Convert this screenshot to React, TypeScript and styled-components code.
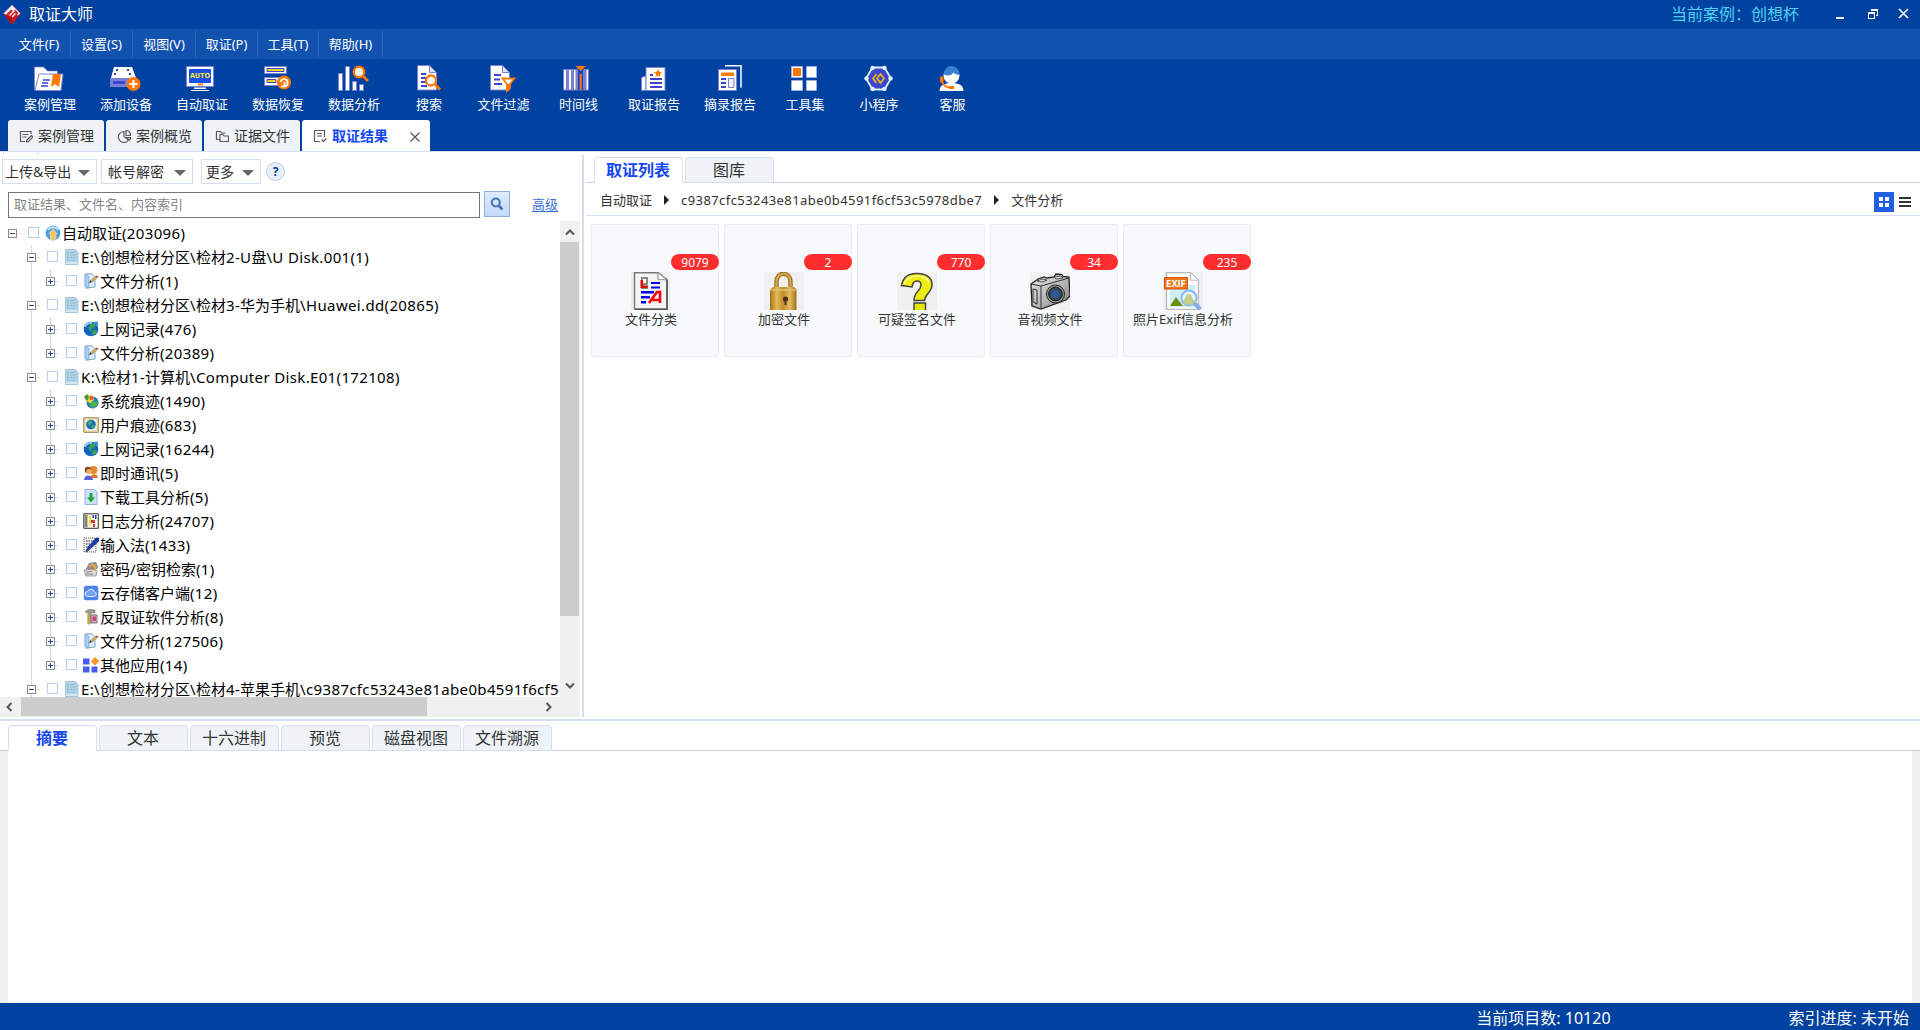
import React from 'react';
import styled, { createGlobalStyle, css } from 'styled-components';

const C = {
  brand: '#00429f',
  menu: '#1152ae',
  menuLine: '#2a68c0',
  line: '#d5dff0',
  rule: '#c9cbdd',
  tab: '#eff3f8',
  active: '#1548f0',
  text: '#333333',
};

const Global = createGlobalStyle`
  * { box-sizing: border-box; }
  html, body { margin: 0; padding: 0; }
  body {
    background: #fff;
    font-family: "Noto Sans", "Noto Sans CJK SC", sans-serif;
    font-weight: 400;
    overflow: hidden;
  }
  svg { display: block; flex: none; }
`;

const App_ = styled.div`
  width: 1920px;
  height: 1030px;
  display: flex;
  flex-direction: column;
  background: #fff;
  color: ${C.text};
  white-space: nowrap;
`;

/* ---------- title bar ---------- */
const TitleBar = styled.header`
  height: 29px;
  flex: none;
  display: flex;
  align-items: center;
  background: ${C.brand};
  color: #fff;
  padding: 0 9px 0 3px;
`;
const Title = styled.h1`
  margin: 0 auto 0 8px;
  font-size: 16px;
  font-weight: inherit;
  line-height: 26px;
  padding-bottom: 2px;
`;
const CaseName = styled.span`
  font-size: 16px;
  line-height: 26px;
  padding-bottom: 2px;
  color: #4fd0f4;
  margin-right: 36px;
`;
const WindowButtons = styled.div`
  display: flex;
  align-items: center;
  height: 26px;
  padding-bottom: 2px;
`;

/* ---------- menu bar ---------- */
const MenuBar = styled.nav`
  height: 30px;
  flex: none;
  display: flex;
  align-items: center;
  background: ${C.menu};
  padding-left: 8px;
`;
const MenuItem = styled.div<{ $w: number }>`
  width: ${p => p.$w}px;
  height: 26px;
  line-height: 26px;
  text-align: center;
  font-size: 13px;
  color: #fff;
  border-right: 1px solid ${C.menuLine};
`;

/* ---------- tool bar ---------- */
const ToolBar = styled.div`
  height: 61px;
  flex: none;
  display: flex;
  background: ${C.brand};
  padding: 6px 0 0 12px;
`;
const Tool = styled.div<{ $w: number }>`
  width: ${p => p.$w}px;
  display: flex;
  flex-direction: column;
  align-items: center;
  color: #fff;
  font-size: 13px;
  line-height: 20px;
  gap: 1px;
`;

/* ---------- page tabs ---------- */
const PageTabs = styled.div`
  height: 31px;
  flex: none;
  display: flex;
  gap: 2px;
  background: ${C.brand};
  padding-left: 8px;
`;
const PageTab = styled.div<{ $active?: boolean }>`
  width: ${p => (p.$active ? 128 : 96)}px;
  height: 31px;
  display: flex;
  align-items: center;
  gap: 5px;
  padding: ${p => (p.$active ? 0 : 1)}px 0 0 11px;
  border-radius: 3px 3px 0 0;
  background: ${p => (p.$active ? '#fff' : C.tab)};
  color: ${p => (p.$active ? C.active : C.text)};
  font-weight: ${p => (p.$active ? 700 : 'inherit')};
  font-size: 14px;
  line-height: 28px;
`;
const CloseTab = styled.span`
  margin: 2px 0 0 17px;
`;

const TopStrip = styled.div`
  height: 4px;
  flex: none;
  border-top: 1px solid ${C.line};
  padding-left: 3px;
`;
const StripTick = styled.div`
  width: 35px;
  height: 3px;
  border: solid ${C.line};
  border-width: 0 1px;
`;

/* ---------- work area ---------- */
const Work = styled.main`
  height: 562px;
  flex: none;
  display: flex;
`;
const LeftPanel = styled.section`
  width: 582px;
  flex: none;
  display: flex;
  flex-direction: column;
`;
const Splitter = styled.div`
  width: 2px;
  flex: none;
  background: ${C.line};
`;
const RightPanel = styled.section`
  flex: 1;
  display: flex;
  flex-direction: column;
  padding: 2px 0 0 2px;
`;

const FilterRow = styled.div`
  height: 36px;
  display: flex;
  align-items: center;
  padding: 0 0 3px 2px;
`;
const DropButton = styled.div<{ $w: number; $ml?: number; $pl: number }>`
  width: ${p => p.$w}px;
  height: 25px;
  margin-left: ${p => p.$ml ?? 0}px;
  padding: 0 6px 0 ${p => p.$pl}px;
  border: 1px solid ${C.line};
  display: flex;
  align-items: center;
  justify-content: space-between;
  font-size: 14px;
  line-height: 22px;
`;
const Caret = styled.i`
  margin-top: 2px;
  border: 6px solid transparent;
  border-top-color: #666;
  border-bottom: 0;
`;
const Help = styled.div`
  width: 19px;
  height: 19px;
  margin-left: 5px;
  border: 1px solid #bccde4;
  border-radius: 50%;
  background: #e9eff7;
  color: #00429f;
  font-size: 12px;
  font-weight: 700;
  line-height: 17px;
  text-align: center;
`;

const SearchRow = styled.div`
  height: 30px;
  display: flex;
  padding-left: 8px;
`;
const SearchBox = styled.div`
  width: 472px;
  height: 26px;
  margin-top: 1px;
  border: 1px solid #767676;
  padding-left: 5px;
  font-size: 13px;
  line-height: 23px;
  color: #858585;
`;
const SearchButton = styled.div`
  width: 26px;
  height: 26px;
  margin-left: 4px;
  border: 1px solid #91addd;
  background: linear-gradient(#dceafd, #c3dafd);
  display: flex;
  align-items: center;
  justify-content: center;
`;
const Advanced = styled.a`
  margin-left: 22px;
  font-size: 13px;
  line-height: 26px;
  color: #3a6fd8;
  text-decoration: underline;
  text-underline-offset: 2px;
`;

const TreeArea = styled.div`
  height: 476px;
  display: flex;
`;
const Tree = styled.div`
  width: 560px;
  height: 476px;
  overflow: hidden;
`;
const Row = styled.div`
  height: 24px;
  display: flex;
  align-items: center;
  padding-left: 8px;
`;
const Guide = styled.span<{ $line?: boolean }>`
  width: 19px;
  height: 24px;
  flex: none;
  background: ${p =>
    p.$line ? 'linear-gradient(#d9d9d9,#d9d9d9) 4px 0 / 1px 100% no-repeat' : 'none'};
`;
const Node = styled.span<{ $line: boolean; $last?: boolean }>`
  width: 20px;
  height: 24px;
  flex: none;
  display: flex;
  align-items: center;
  background:
    linear-gradient(#d9d9d9, #d9d9d9) 9px 12px / 4px 1px no-repeat
    ${p =>
      p.$line
        ? css`, linear-gradient(#d9d9d9, #d9d9d9) 4px 0 / 1px ${p.$last ? '12px' : '100%'} no-repeat`
        : ''};
`;
const Check = styled.span`
  width: 11px;
  height: 11px;
  flex: none;
  margin: 0 6px 2px 0;
  border: 1px solid #b4cdf8;
  background: #fff;
`;
const RowText = styled.span`
  margin-left: 1px;
  color: #000;
  font-size: 15px;
  line-height: 24px;
`;
const Latin = styled.span<{ $ls: number }>`
  letter-spacing: ${p => p.$ls}px;
`;

const VScroll = styled.div`
  width: 20px;
  height: 476px;
  background: #f0f0f0;
  display: flex;
  flex-direction: column;
  align-items: center;
  justify-content: space-between;
  padding: 0 1px 6px 0;
`;
const VTop = styled.div`
  display: flex;
  flex-direction: column;
  align-items: center;
  gap: 5px;
  padding-top: 6px;
`;
const VThumb = styled.div`
  width: 19px;
  height: 374px;
  background: #cdcdcd;
`;
const HScroll = styled.div`
  width: 580px;
  height: 20px;
  background: #f0f0f0;
  display: flex;
  align-items: center;
  padding: 0 27px 1px 5px;
`;
const HThumb = styled.div`
  width: 406px;
  height: 19px;
  margin: 0 auto 0 6px;
  background: #cdcdcd;
`;

/* ---------- sub tabs ---------- */
const SubTabs = styled.div<{ $pad: number }>`
  height: 26px;
  flex: none;
  display: flex;
  gap: 2px;
  padding-left: ${p => p.$pad}px;
  background: linear-gradient(${C.rule}, ${C.rule}) 0 25px / 100% 1px no-repeat;
`;
const SubTab = styled.div<{ $active?: boolean }>`
  width: 89px;
  height: 26px;
  border: 1px solid ${C.line};
  border-bottom-color: ${p => (p.$active ? '#fff' : C.line)};
  border-radius: 4px 4px 0 0;
  background: ${p => (p.$active ? '#fff' : C.tab)};
  color: ${p => (p.$active ? C.active : C.text)};
  font-weight: ${p => (p.$active ? 700 : 'inherit')};
  font-size: 16px;
  line-height: 24px;
  text-align: center;
  padding-right: 1px;
`;

const Crumbs = styled.div`
  height: 33px;
  flex: none;
  display: flex;
  align-items: center;
  border-bottom: 1px solid ${C.line};
  padding: 1px 7px 0 14px;
  font-size: 13px;
  line-height: 30px;
`;
const CrumbArrow = styled.i<{ $ml: number }>`
  margin: 0 12px 0 ${p => p.$ml}px;
  border: 5px solid transparent;
  border-left-color: #222;
  border-right: 0;
`;
const Views = styled.div`
  margin-left: auto;
  display: flex;
  align-items: center;
  gap: 4px;
  padding-top: 4px;
`;

const Cards = styled.div`
  display: flex;
  gap: 5px;
  padding: 8px 0 0 5px;
`;
const Card = styled.div`
  position: relative;
  width: 128px;
  height: 133px;
  border: 1px solid #e9ecf0;
  border-radius: 2px;
  background: #f7f9fc;
  display: flex;
  flex-direction: column;
  align-items: center;
  padding: 47px 8px 0 0;
  font-size: 13px;
  line-height: 19px;
`;
const Badge = styled.span`
  position: absolute;
  right: -1px;
  top: 29px;
  width: 48px;
  height: 16px;
  border-radius: 8px;
  background: #ff2d2d;
  color: #fff;
  font-size: 12px;
  line-height: 17px;
  text-align: center;
`;

/* ---------- detail pane ---------- */
const Detail = styled.section`
  flex: 1;
  display: flex;
  flex-direction: column;
  border-top: 2px solid ${C.line};
  margin-top: 2px;
  padding-top: 4px;
`;
const DetailBody = styled.div`
  flex: 1;
  border: solid #f0f0f0;
  border-width: 0 8px;
  background: #fff;
`;
const StatusBar = styled.footer`
  height: 27px;
  flex: none;
  background: ${C.brand};
  color: #fff;
  display: flex;
  justify-content: flex-end;
  padding: 1px 11px 0 0;
  gap: 178px;
  font-size: 16px;
  line-height: 29px;
`;

/* ---------- drawings ---------- */
const P = '#7a80d4';
const B = '#3a46cf';
const O = '#ff7800';

const Logo = () => (
  <svg width="18" height="20" viewBox="0 0 18 20">
    <path d="M9 0 17.500 8.500 9 19.500 .5 8.500z" fill="#d9161c" />
    <path d="M9 0 17.500 8.500 14.500 10.500 9 6 3.500 10.500 .5 8.500z" fill="#f3f3f5" />
    <path d="M3 9.500 8 4.500l2 1.500L5.500 11zM9.500 6.500l2.500-2L15.500 8l-2 2.500z" fill="#d2262a" />
    <path d="m6.500 10.500 5-5M9 12l3.500-3.500" stroke="#fff" strokeWidth="1.300" />
    <path d="M9 13v6.500L.5 8.500z" fill="#b40d12" />
  </svg>
);

const toolIcons: Record<string, React.ReactNode> = {
  case: (
    <>
      <path d="M.5 25V2h9l4 4h10v5H7L4 25z" fill="#fff" stroke={P} strokeWidth=".6" />
      <path d="M5 9h24l-2 16.500H1z" fill="#fff" stroke={P} />
      <path d="M9 15h7M8 18h6M7 21h7" stroke={B} strokeWidth="1.600" />
      <path d="M19 9h8l-2 13-4-3-4 3z" fill={O} />
    </>
  ),
  device: (
    <>
      <path d="M4 2h18l4 11H1z" fill="#fff" />
      <path d="M0 13h25v9H0z" fill={P} />
      <path d="M3 16h12v3H3z" fill={B} />
      <path d="M6 4h2v2H6zM17 4h2v2h-2zM4 8h2v2H4zM19 8h2v2h-2z" fill={B} />
      <circle cx="23.500" cy="19" r="7" fill={O} />
      <path d="M23.500 15v8M19.500 19h8" stroke="#fff" strokeWidth="2" />
    </>
  ),
  auto: (
    <>
      <path d="M.5 1.500h27v20H.5z" fill="#fff" stroke={P} />
      <path d="M3 4h22v14H3z" fill="#1a50e8" />
      <path d="M12 18.500h5v2h-5z" fill={O} />
      <path d="M8 22.500h12v1.500H8zM5 25h18v1H5z" fill="#fff" />
      <text x="14" y="12.500" fontSize="7" fontWeight="700" fontFamily="DejaVu Sans" textLength="20" lengthAdjust="spacingAndGlyphs" textAnchor="middle" fill="#f3e824">AUTO</text>
    </>
  ),
  restore: (
    <>
      <path d="M2.500 1.500h22v7h-22zM2.500 12.500h22v8h-22z" fill="#fff" stroke={P} />
      <path d="M5 3.500h17v3H5zM5 14.500h9v3H5z" fill="#f0d820" stroke={B} />
      <circle cx="22" cy="17.500" r="7" fill={O} />
      <path d="M18.500 17a3.600 3.600 0 1 1 4 4.300M22.500 17v4.500H19" stroke="#fff" strokeWidth="1.800" fill="none" />
    </>
  ),
  analyse: (
    <>
      <path d="M.5 8.500h4v17h-4zM7.500 1.500h4v24h-4zM14.500 16.500h4v9h-4zM21.500 19.500h4v6h-4z" fill="#fff" stroke={P} />
      <circle cx="21" cy="7" r="5.200" fill="#fff" stroke={O} strokeWidth="2.400" />
      <path d="m25 11 5 5" stroke={O} strokeWidth="2.600" />
    </>
  ),
  search: (
    <>
      <path d="M4.500.5h12l7 7V25h-19z" fill="#fff" stroke={P} />
      <path d="M16.500.5v7h7z" fill="#dfe2fa" stroke={P} />
      <path d="M8 9h5M8 13h5M8 17h5M8 21h6" stroke={B} strokeWidth="1.800" />
      <circle cx="18" cy="15.500" r="5" fill="#fff" stroke={O} strokeWidth="2.300" />
      <path d="m22 19.500 5 5" stroke={O} strokeWidth="2.800" />
    </>
  ),
  filter: (
    <>
      <path d="M2.500.5h12l7 7V25h-19z" fill="#fff" stroke={P} />
      <path d="M14.500.5v7h7z" fill="#dfe2fa" stroke={P} />
      <path d="M6 10h7M6 14.500h6M6 19h8" stroke={B} strokeWidth="1.800" />
      <path d="M14.500 13.500h12l-4.500 5.500v4l-3 3v-7z" fill="#fff" stroke={O} strokeWidth="1.800" />
      <path d="M19 19h3v4l-3 3z" fill={O} />
    </>
  ),
  time: (
    <>
      <path d="M.5 4.500h25V25H.5z" fill="#fff" stroke={P} />
      <path d="M3 4.500h3V25H3zM8 4.500h3V25H8zM12.500 4.500H15V25h-2.500zM20.500 4.500h3V25h-3z" fill={P} />
      <path d="M15 4h5.500v21H15z" fill="#1d43b5" />
      <path d="M16.700 9h2v16h-2z" fill={O} />
      <path d="M12.500 1h10.500l-5.300 5z" fill={O} />
    </>
  ),
  report: (
    <>
      <path d="M3.500 12.500 8 11v14.500H3.500z" fill="#fff" stroke={P} />
      <path d="M8 2.500h19v23H8z" fill="#fff" stroke={P} />
      <path d="m20 4 1.200 2.800 3 .2-2.300 2 .7 3-2.600-1.600L17.400 12l.7-3-2.300-2 3-.2z" fill={O} />
      <path d="M12 10h3M12 14h12M12 18h12M12 22h12" stroke={B} strokeWidth="1.800" />
    </>
  ),
  excerpt: (
    <>
      <path d="M11 .8h16v22" fill="none" stroke="#fff" strokeWidth="1.500" />
      <path d="M4.500 4.500h18v21h-18z" fill="#fff" stroke={P} />
      <path d="M7 7.500h13v3.500H7z" fill={O} />
      <path d="M7 14h5M7 18h5M7 22h5" stroke={B} strokeWidth="1.800" />
      <path d="M14.500 13.500h5.500v9h-5.500z" fill="#eef" stroke={P} />
    </>
  ),
  tools: (
    <>
      <path d="M2.500 1.500h11v11h-11zM17.500 1.500h10v11h-10zM2.500 15.500h11v10h-11zM17.500 15.500h10v10h-10z" fill="#fff" stroke="#aab0e8" strokeWidth=".8" />
      <path d="M4 3h8v8H4z" fill={O} />
    </>
  ),
  mini: (
    <>
      <path d="M9.500 2.500h12L28 13.500l-6.500 11h-12L3 13.500z" fill={B} stroke="#dff0ff" strokeWidth="1.800" />
      <g fill="#dff0ff">
        <circle cx="9.500" cy="3" r="2.200" /><circle cx="21.500" cy="3" r="2.200" /><circle cx="27.500" cy="13.500" r="2.200" />
        <circle cx="3.500" cy="13.500" r="2.200" /><circle cx="9.500" cy="24" r="2.200" /><circle cx="21.500" cy="24" r="2.200" />
      </g>
      <path d="m13.500 9-3.500 4.500 3.500 4.500M17.500 9 14 13.500l3.500 4.500 3.500-4.500z" fill="none" stroke="#f2b01c" strokeWidth="1.800" />
    </>
  ),
  service: (
    <>
      <path d="M2.500 26c0-6 5-8 12-8s12 2 12 8z" fill="#fff" />
      <circle cx="14.500" cy="10.500" r="8" fill="#fff" />
      <path d="M6.500 9.500a8 8.500 0 0 1 16 0c-3 1-5-1-6-2-2 3-5 4-10 2z" fill="#3c82d2" />
      <path d="M3 11.500h3.500v6H3z" fill={O} />
      <path d="M5 16c1 5 4 6.500 9 6.500" stroke={O} strokeWidth="1.500" fill="none" />
      <path d="M12 21h5v3h-5z" fill={O} />
    </>
  ),
};
const ToolIcon = ({ k }: { k: string }) => (
  <svg width="32" height="28" viewBox="0 0 32 28">{toolIcons[k]}</svg>
);

const tabIcons: Record<string, React.ReactNode> = {
  edit: <path d="M6 12.500H1.500v-10H12V5M3.500 5.500h6M3.500 8h4M12.500 6.500l-5 5v1.500H9l5-5z" />,
  pie: <path d="M7 2.500A5.500 5.500 0 1 0 11.500 11L7 7.500zM9 1.500v5h4.500c0-3-1.500-5-4.500-5zM9 8.500l3.500 2.500c.7-.8 1-1.500 1-2.500z" />,
  files: <path d="M4.500 10.500h-3v-8h4l1 1.500h4M5 12.500v-7h3l1 1.500h4.500v5.500z" />,
  result: <path d="M7 12.500H1.500v-11h10V8M4 4.500h5M4 7h5M8.500 10.500l2 2 3-3" />,
};
const TabIcon = ({ k }: { k: string }) => (
  <svg width="14" height="14" viewBox="0 0 14 14" fill="none" stroke="#5a5a5a" strokeWidth="1.200">{tabIcons[k]}</svg>
);

const globe = (
  <>
    <circle cx="8" cy="8" r="7.300" fill="#1763c6" />
    <path d="M7.500 3c2-1.500 4-1 5.500 0l-1.500 3-2 1-2 3-2-2.500zM9 10l3-1 2 1-2 3.500-2.500 1z" fill="#35a845" />
    <path d="M2 6c1.500-3 4-4.500 7-4" stroke="#8fd0ff" strokeWidth="1.600" fill="none" />
  </>
);
const treeIcons: Record<string, React.ReactNode> = {
  root: (
    <>
      <circle cx="8" cy="8" r="7" fill="#4d9fe0" stroke="#2a78c8" strokeWidth=".6" />
      <path d="M3 5a6 6 0 0 1 10 0" stroke="#bfe3ff" strokeWidth="2" fill="none" />
      <path d="M5.500 15V9L4 8.500 8 4l4 4.500-1 .5v5z" fill="#f6c35a" stroke="#fff0cf" strokeWidth=".5" />
    </>
  ),
  disk: (
    <>
      <path d="M1.500.5H11L14 3v12.500H1.500z" fill="#b7d5e8" stroke="#8fb2ca" strokeWidth=".7" />
      <path d="M3.500 3.500h1M3.500 6h1M3.500 8.500h1M3.500 11h1" stroke="#3d7d9c" />
      <path d="M6 3.500h5M6 6h5.500M6 8.500h5.500M6 11h5.500" stroke="#8fb6cf" />
      <path d="M2 13h11.500v2H2z" fill="#d3e6f2" />
    </>
  ),
  file: (
    <>
      <path d="M3 .8h6l3 3v10l-9 1.500z" fill="#e4f0fc" stroke="#6e93bd" strokeWidth=".9" />
      <path d="M1.800 1 6 3.500V15l-4.200-1.500z" fill="#a9cdf0" stroke="#6e93bd" strokeWidth=".6" />
      <path d="m6.500 9.500 1-2L12.500 3.500l1.500 1.500L9 9z" fill="#d9b24e" stroke="#555" strokeWidth=".4" />
      <path d="m12.500 3.500 1-1 1.800 1-1.300 1.500z" fill="#c4392f" />
      <path d="m6.200 9.800 1-2.300L9 9z" fill="#333" />
    </>
  ),
  globe: <>{globe}<path d="m10 1 5-.5L14.500 6z" fill="#2d8ee0" /></>,
  system: (
    <>
      <circle cx="9.500" cy="9.500" r="6" fill="#2a72c8" />
      <path d="M6 9c3-2 5 1 8-1l1 3-4 4-4-2z" fill="#43b84a" />
      <path d="M1 4 4 1l6 2 1 4-4 3-4-2z" fill="#f3d53c" />
      <path d="m1 4 3-3 2 4-2 3z" fill="#3a9a43" /><path d="M6 3h4v4H7z" fill="#e8632c" />
    </>
  ),
  user: (
    <>
      <path d="M.8.8h14.500v14.500H.8z" fill="#f0dfa0" stroke="#9a854a" />
      <path d="M2.500 2.500h11v11h-11z" fill="#e4eff8" />
      <circle cx="8" cy="7.500" r="4.800" fill="#1d6cb8" />
      <path d="M5 5l3-1.500L9 6 6 9zM8 9l3-1 1 1-2 3z" fill="#49b553" />
    </>
  ),
  chat: (
    <>
      <circle cx="10.500" cy="5" r="4" fill="#e8882f" />
      <path d="M7 13c1-5 7-5 8 0z" fill="#e6742a" />
      <circle cx="5" cy="5" r="3.300" fill="#8a4b27" /><circle cx="6" cy="6.500" r="2.600" fill="#f0b070" />
      <path d="M1 15c0-6 8.500-6 9 0z" fill="#5a62dd" />
    </>
  ),
  download: (
    <>
      <path d="M2 .5h9.500L14 3v12.500H2z" fill="#cfe1fd" stroke="#7e9fd8" strokeWidth=".8" />
      <path d="M6.500 4h3v4.500H12l-4 5-4-5h2.500z" fill="#19a83a" />
    </>
  ),
  log: (
    <>
      <path d="M.8.8h14.500v14.500H.8z" fill="#fdfbe8" stroke="#333" />
      <path d="M1.500 1.500h3v13h-3z" fill="#8a8378" />
      <path d="M6 3h2v9H6z" fill="#f0dc4a" /><path d="M9.500 2h1.500v3H9.500zM12 2h1.500v4H12z" fill="#3140d0" />
      <path d="M8 7h4v3H8zM10 11h2v3h-2z" fill="#d43a46" />
    </>
  ),
  input: (
    <>
      <path d="M1 1h12v14H1z" fill="#eee" stroke="#555" strokeDasharray="1 1" />
      <path d="M3 4h8M3 7h6M3 10h5M3 13h3" stroke="#222" strokeDasharray="1.500 1" />
      <path d="M13 1h3v3L7 12l-4 3 2-5z" fill="#1b3fae" stroke="#0a1a55" strokeWidth=".6" />
    </>
  ),
  password: (
    <>
      <path d="M3 8 6 2l7-1 2 5-2 3z" fill="#8c8f94" />
      <path d="M6 6c0-4 7-4 7 0v3h-2V6.500c0-2-3-2-3 0" fill="#f2a73c" />
      <path d="m1 9 8-1 5 2-1 5H3z" fill="#dcdcd8" stroke="#777" strokeWidth=".7" />
      <path d="m3 11 6-.5M3 13h7" stroke="#888" />
    </>
  ),
  cloud: (
    <>
      <rect x=".8" y=".8" width="14.500" height="14.500" rx="2.500" fill="#4d82ee" />
      <path d="M4.500 11.500a2.500 2.500 0 0 1 0-5 3.700 3.700 0 0 1 7 .5 2.300 2.300 0 0 1 0 4.500z" fill="#6fa4f6" stroke="#e3eeff" strokeWidth="1" />
    </>
  ),
  anti: (
    <>
      <path d="M2 3c2-3 6-2.500 10-2v3H8L7 15H5V4z" fill="#9a9c90" stroke="#6b6b62" strokeWidth=".5" />
      <path d="M4.500 5h3v10h-3z" fill="#c9a64a" />
      <path d="M8 6h6v8H8z" fill="#b9bde0" stroke="#7a5068" strokeWidth=".8" /><path d="M9.500 7.500H13V12H9.500z" fill="#d0407c" />
    </>
  ),
  other: (
    <>
      <path d="M0 1.500h6.500v6H0zM0 9.500h6.500v6H0zM8.500 9.500h6v6h-6z" fill="#4a5cf0" />
      <path d="m12 0 4.200 4.200L12 8.400 7.800 4.200z" fill="#f7952a" />
    </>
  ),
};
const TreeIcon = ({ k }: { k: string }) => (
  <svg width="16" height="16" viewBox="0 0 16 16">{treeIcons[k]}</svg>
);
const Expander = ({ open }: { open: boolean }) => (
  <svg width="9" height="9" viewBox="0 0 9 9" shapeRendering="crispEdges">
    <path d="M.5.5h8v8h-8z" fill="#fff" stroke="#8a8a8a" />
    <path d={open ? 'M2 4.500h5' : 'M2 4.500h5M4.500 2v5'} stroke="#2a4384" />
  </svg>
);
const Chevron = ({ d }: { d: string }) => (
  <svg width="10" height="10" viewBox="0 0 10 10" fill="none" stroke="#555" strokeWidth="2"><path d={d} /></svg>
);

const cardIcons: Record<string, React.ReactNode> = {
  classify: (
    <>
      <path d="M3.500.7h23.500l9 7V37h-32.500z" fill="#f4f4f4" stroke="#777" strokeWidth="1.500" />
      <path d="M36 8v29.500H4" fill="none" stroke="#555" strokeWidth="1.500" />
      <path d="M27 .7v7h9z" fill="#fff" stroke="#888" />
      <path d="M10 5h7v12h-7z" fill="#888" /><path d="M12 7h3v4h-3z" fill="#fff" />
      <path d="M9.500 8h2.500v6h4.500v2h-7z" fill="#e00" />
      <path d="M20 10h9v2h-9zM20 14.500h9v2h-9zM10 19h13v2.500H10zM10 24h9v2.500h-9zM10 29h5v2.500h-5z" fill="#0000f0" />
      <path d="m18 31 8-11h3v11M21.500 28h7" fill="none" stroke="#f00" strokeWidth="2.600" />
    </>
  ),
  lock: (
    <>
      <defs>
        <linearGradient id="gold" x1="0" x2="1"><stop offset="0" stopColor="#a57317" /><stop offset=".25" stopColor="#e3b95b" /><stop offset=".5" stopColor="#c18d2a" /><stop offset=".75" stopColor="#e5bb60" /><stop offset="1" stopColor="#a06f18" /></linearGradient>
      </defs>
      <path d="M12.500 19V10c0-11 14-11 14 0v9" fill="none" stroke="#9a6f22" strokeWidth="4.400" />
      <path d="M12.500 19V10c0-11 14-11 14 0v9" fill="none" stroke="#d6ab50" strokeWidth="2" />
      <path d="m6 18 3-3h21l2.500 2.500V38H6z" fill="url(#gold)" />
      <path d="M6 18h26.500" stroke="#f0cf80" />
      <circle cx="21.500" cy="27" r="2.600" fill="#4a3210" /><path d="M20.500 27h2v6h-2z" fill="#4a3210" />
    </>
  ),
  question: (
    <>
      <path d="M4.500 13.500C6 5 12 1.500 20 1.500c9 0 15 4 15 11 0 8-7 9-7.500 16H17c0-9 7-9.500 7-15.500 0-2.500-1.500-4-4-4-3 0-4.500 2.500-5 6z" fill="#eded12" stroke="#444" strokeWidth="1.500" />
      <path d="M7.500 11.500C10 6 14 4 20 4c6 0 10 2 12 6" fill="none" stroke="#fbfb9a" strokeWidth="1.600" />
      <path d="M17 31h11.500v8H17z" fill="#e6e60a" stroke="#444" strokeWidth="1.500" />
    </>
  ),
  camera: (
    <>
      <defs>
        <linearGradient id="steel" y2="1"><stop offset="0" stopColor="#e6e6e6" /><stop offset=".6" stopColor="#b0b0b0" /><stop offset="1" stopColor="#757575" /></linearGradient>
      </defs>
      <path d="M1 12 8 7l6-2 3 1 7-1 2-3 6 .5 1 2L39 5l1 19-4 4-25 9-9-3z" fill="url(#steel)" stroke="#222" strokeWidth="1.300" />
      <path d="m1 12 10 2 28-8M11 14v22M3 17l4 1v14l-4-2z" fill="none" stroke="#333" />
      <path d="m7 9 5-2 5 1-5 2zM24 5l7-1 2 2-7 1z" fill="#ddd" stroke="#333" strokeWidth=".8" />
      <circle cx="25.500" cy="22" r="9" fill="#999" stroke="#222" />
      <circle cx="25.500" cy="22" r="6.800" fill="#3c4650" stroke="#111" />
      <circle cx="25.500" cy="22" r="4.300" fill="#2c5a98" />
    </>
  ),
  exif: (
    <>
      <path d="M3.500.7h24l8 7.500V37.500h-32z" fill="#fafafa" stroke="#bbb" strokeWidth="1.300" />
      <path d="M27.500.7v7.500h8z" fill="#fff" stroke="#bbb" />
      <path d="M7 13h25v22H7z" fill="#cdeffc" />
      <path d="m7 34 6-9 7 9z" fill="#6e8c10" />
      <circle cx="26" cy="26" r="7.500" fill="#e8f4fd" stroke="#8ab6f0" strokeWidth="2" />
      <path d="M20 30c2-3 3-8 6-8s3 5 6 8c-3 4-9 4-12 0z" fill="#c3cf88" />
      <path d="m31.500 31.500 6 6" stroke="#82b0ee" strokeWidth="4" />
      <path d="M1.500 5.500h23v11.500h-23z" fill="#f0741c" stroke="#d0560c" />
      <text x="13" y="14.500" fontSize="9" fontWeight="700" fontFamily="DejaVu Sans" textAnchor="middle" textLength="20" lengthAdjust="spacingAndGlyphs" fill="#fff">EXIF</text>
    </>
  ),
};
const CardIcon = ({ k }: { k: string }) => (
  <svg width="40" height="38" viewBox="0 0 40 38"><path d="M0 0h40v38H0z" fill="#f0f0f0" />{cardIcons[k]}</svg>
);

/* ---------- data ---------- */
const menus: [string, number][] = [['文件(F)', 63], ['设置(S)', 62], ['视图(V)', 63], ['取证(P)', 62], ['工具(T)', 61], ['帮助(H)', 64]];
const tools: [string, string, number][] = [
  ['case', '案例管理', 76], ['device', '添加设备', 76], ['auto', '自动取证', 76], ['restore', '数据恢复', 76],
  ['analyse', '数据分析', 76], ['search', '搜索', 74], ['filter', '文件过滤', 75], ['time', '时间线', 75],
  ['report', '取证报告', 76], ['excerpt', '摘录报告', 76], ['tools', '工具集', 74], ['mini', '小程序', 74], ['service', '客服', 73],
];
type TreeRow = { l: number; i: string; t: string; open?: boolean; last?: boolean };
const rows: TreeRow[] = [
  { l: 0, i: 'root', t: '自动取证(203096)', open: true },
  { l: 1, i: 'disk', t: 'E:\\创想检材分区\\检材2-U盘\\U Disk.001(1)', open: true },
  { l: 2, i: 'file', t: '文件分析(1)', last: true },
  { l: 1, i: 'disk', t: 'E:\\创想检材分区\\检材3-华为手机\\Huawei.dd(20865)', open: true },
  { l: 2, i: 'globe', t: '上网记录(476)' },
  { l: 2, i: 'file', t: '文件分析(20389)', last: true },
  { l: 1, i: 'disk', t: 'K:\\检材1-计算机\\Computer Disk.E01(172108)', open: true },
  { l: 2, i: 'system', t: '系统痕迹(1490)' },
  { l: 2, i: 'user', t: '用户痕迹(683)' },
  { l: 2, i: 'globe', t: '上网记录(16244)' },
  { l: 2, i: 'chat', t: '即时通讯(5)' },
  { l: 2, i: 'download', t: '下载工具分析(5)' },
  { l: 2, i: 'log', t: '日志分析(24707)' },
  { l: 2, i: 'input', t: '输入法(1433)' },
  { l: 2, i: 'password', t: '密码/密钥检索(1)' },
  { l: 2, i: 'cloud', t: '云存储客户端(12)' },
  { l: 2, i: 'anti', t: '反取证软件分析(8)' },
  { l: 2, i: 'file', t: '文件分析(127506)' },
  { l: 2, i: 'other', t: '其他应用(14)', last: true },
  { l: 1, i: 'disk', t: 'E:\\创想检材分区\\检材4-苹果手机\\c9387cfc53243e81abe0b4591f6cf5', open: true },
];
const cards = [
  ['classify', '文件分类', '9079'], ['lock', '加密文件', '2'], ['question', '可疑签名文件', '770'],
  ['camera', '音视频文件', '34'], ['exif', '照片Exif信息分析', '235'],
];

/* Widens only the Latin runs of a mixed string. */
const Mixed = ({ t, ls }: { t: string; ls: number }) => (
  <>
    {t.split(/([\x20-\x7e]+)/).map((s, i) => (i % 2 ? <Latin key={i} $ls={ls}>{s}</Latin> : s))}
  </>
);

export default function App() {
  return (
    <App_>
      <Global />
      <TitleBar>
        <Logo />
        <Title>取证大师</Title>
        <CaseName>当前案例：创想杯</CaseName>
        <WindowButtons>
          <svg width="76" height="14" viewBox="0 0 76 14" fill="none" stroke="#fff" shapeRendering="crispEdges">
            <path d="M1 11h8" strokeWidth="2" />
            <path d="M36.500 4V2.500h6v6H41M33.500 5.500h6v6h-6zM36 3h7M33 6h7" />
            <path d="m64 2 9 9M73 2l-9 9" strokeWidth="1.600" shapeRendering="auto" />
          </svg>
        </WindowButtons>
      </TitleBar>
      <MenuBar>{menus.map(([t, w]) => <MenuItem key={t} $w={w}>{t}</MenuItem>)}</MenuBar>
      <ToolBar>
        {tools.map(([k, t, w]) => <Tool key={k} $w={w}><ToolIcon k={k} />{t}</Tool>)}
      </ToolBar>
      <PageTabs>
        <PageTab><TabIcon k="edit" />案例管理</PageTab>
        <PageTab><TabIcon k="pie" />案例概览</PageTab>
        <PageTab><TabIcon k="files" />证据文件</PageTab>
        <PageTab $active>
          <TabIcon k="result" />取证结果
          <CloseTab>
            <svg width="10" height="10" viewBox="0 0 10 10" stroke="#555" strokeWidth="1.200"><path d="m.5.5 9 9M9.500.5l-9 9" /></svg>
          </CloseTab>
        </PageTab>
      </PageTabs>
      <TopStrip><StripTick /></TopStrip>

      <Work>
        <LeftPanel>
          <FilterRow>
            <DropButton $w={95} $pl={2}>上传&amp;导出<Caret /></DropButton>
            <DropButton $w={92} $ml={4} $pl={6}>帐号解密<Caret /></DropButton>
            <DropButton $w={60} $ml={8} $pl={4}>更多<Caret /></DropButton>
            <Help>?</Help>
          </FilterRow>
          <SearchRow>
            <SearchBox>取证结果、文件名、内容索引</SearchBox>
            <SearchButton>
              <svg width="14" height="14" viewBox="0 0 14 14" fill="none" stroke="#4a74b4" strokeWidth="2"><circle cx="5.800" cy="5.500" r="4" /><path d="m8.500 8.500 4 4" strokeWidth="2.600" /></svg>
            </SearchButton>
            <Advanced>高级</Advanced>
          </SearchRow>
          <TreeArea>
            <Tree>
              {rows.map((r, i) => (
                <Row key={i}>
                  {r.l > 0 && <Guide />}
                  {r.l > 1 && <Guide $line />}
                  <Node $line={r.l > 0} $last={r.last}><Expander open={!!r.open} /></Node>
                  <Check />
                  <TreeIcon k={r.i} />
                  <RowText><Mixed t={r.t} ls={0.35} /></RowText>
                </Row>
              ))}
            </Tree>
            <VScroll>
              <VTop><Chevron d="M1 7.500 5 3.500l4 4" /><VThumb /></VTop>
              <Chevron d="m1 2.500 4 4 4-4" />
            </VScroll>
          </TreeArea>
          <HScroll>
            <Chevron d="M6.500 1l-4 4 4 4" />
            <HThumb />
            <Chevron d="m3.500 1 4 4-4 4" />
          </HScroll>
        </LeftPanel>
        <Splitter />
        <RightPanel>
          <SubTabs $pad={8}>
            <SubTab $active>取证列表</SubTab>
            <SubTab>图库</SubTab>
          </SubTabs>
          <Crumbs>
            自动取证<CrumbArrow $ml={12} />
            <Mixed t="c9387cfc53243e81abe0b4591f6cf53c5978dbe7" ls={0.42} /><CrumbArrow $ml={12} />
            文件分析
            <Views>
              <svg width="20" height="20" viewBox="0 0 20 20"><path d="M0 0h20v20H0z" fill="#1f5fe0" /><path d="M5 5h4v4H5zM11 5h4v4h-4zM5 11h4v4H5zM11 11h4v4h-4z" fill="#fff" /></svg>
              <svg width="15" height="20" viewBox="0 0 15 20" stroke="#333" strokeWidth="2"><path d="M1 6h12M1 10h12M1 14h12" /></svg>
            </Views>
          </Crumbs>
          <Cards>
            {cards.map(([k, t, n]) => (
              <Card key={k}><Badge>{n}</Badge><CardIcon k={k} />{t}</Card>
            ))}
          </Cards>
        </RightPanel>
      </Work>

      <Detail>
        <SubTabs $pad={8}>
          <SubTab $active>摘要</SubTab>
          {['文本', '十六进制', '预览', '磁盘视图', '文件溯源'].map(t => <SubTab key={t}>{t}</SubTab>)}
        </SubTabs>
        <DetailBody />
      </Detail>
      <StatusBar>
        <span>当前项目数: 10120</span>
        <span>索引进度: 未开始</span>
      </StatusBar>
    </App_>
  );
}
